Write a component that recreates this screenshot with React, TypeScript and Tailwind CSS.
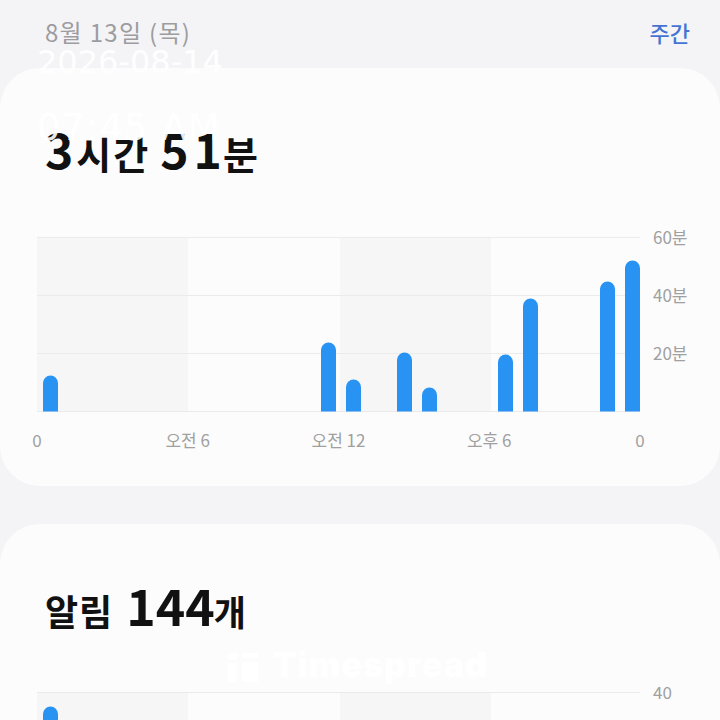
import React from "react";

type Bar = { x: number; h: number };

const bars1: Bar[] = [
  { x: 6, h: 36 },
  { x: 284, h: 69 },
  { x: 309, h: 32 },
  { x: 360, h: 59 },
  { x: 385, h: 24 },
  { x: 461, h: 57 },
  { x: 486, h: 113 },
  { x: 563, h: 130 },
  { x: 588, h: 151 },
];

const bars2: Bar[] = [
  { x: 6, h: 160 },
  { x: 284, h: 60 },
  { x: 360, h: 40 },
  { x: 486, h: 90 },
  { x: 588, h: 110 },
];

function barPath(x: number, h: number) {
  const w = 15;
  const r = 7.5;
  const base = 174.5;
  const top = base - h;
  return `M${x} ${base} L${x} ${top + r} A${r} ${r} 0 0 1 ${x + w} ${top + r} L${x + w} ${base} Z`;
}

function Plot({ bars }: { bars: Bar[] }) {
  return (
    <svg width="603" height="175" viewBox="0 0 603 175" className="block shrink-0">
      <rect x="0" y="0" width="151" height="175" fill="#f6f6f6" />
      <rect x="303" y="0" width="151" height="175" fill="#f6f6f6" />
      {[0.5, 58.5, 116.5, 174.5].map((y) => (
        <line key={y} x1="0" x2="603" y1={y} y2={y} stroke="#ebebeb" strokeWidth="1" />
      ))}
      {bars.map((b, i) => (
        <path key={i} d={barPath(b.x, b.h)} fill="#2893f3" />
      ))}
    </svg>
  );
}

function Chart({ bars, yLabels }: { bars: Bar[]; yLabels: string[] }) {
  return (
    <div className="flex flex-col">
      <div className="flex pl-[37px]">
        <Plot bars={bars} />
        <div className="ml-[13px] -mt-[10px] flex flex-col text-[17px] text-[#a0a0a0]">
          {yLabels.map((l) => (
            <div key={l} className="h-[58px] leading-[20px] whitespace-nowrap">
              {l}
            </div>
          ))}
        </div>
      </div>
      <div className="ml-[37px] mt-[18px] flex w-[603px] justify-between text-[17px] leading-[20px] text-[#a0a0a0]">
        {["0", "오전 6", "오전 12", "오후 6", "0"].map((l, i) => (
          <div key={i} className="flex w-0 justify-center">
            <span className="whitespace-nowrap">{l}</span>
          </div>
        ))}
      </div>
    </div>
  );
}

export default function App() {
  return (
    <div className="relative h-[720px] w-[720px] overflow-hidden bg-[#f4f4f6] font-['Noto_Sans_CJK_KR',sans-serif]">
      <header className="flex h-[68px] items-center justify-between pb-[4px] pl-[45px] pr-[30px]">
        <span className="text-[24px] tracking-[1.3px] text-[#9c9ca1]">8월 13일 (목)</span>
        <span className="text-[22px] font-medium text-[#4474d3]">주간</span>
      </header>

      <section className="flex h-[418px] flex-col rounded-[40px] bg-[#fcfcfc]">
        <div className="flex h-[108px] shrink-0 items-baseline pl-[45px] pt-[52px] leading-[56px] font-bold text-[#111]">
          <span className="text-[48px]">3</span>
          <span className="ml-[3px] text-[38px] tracking-[2px]">시간</span>
          <span className="ml-[10px] text-[48px] tracking-[5px]">51</span>
          <span className="-ml-[4px] text-[38px]">분</span>
        </div>
        <div className="mt-[61px]">
          <Chart bars={bars1} yLabels={["60분", "40분", "20분"]} />
        </div>
      </section>

      <section className="mt-[38px] flex h-[400px] flex-col rounded-t-[40px] bg-[#fcfcfc]">
        <div className="flex h-[108px] shrink-0 items-baseline pl-[45px] pt-[52px] leading-[56px] font-bold text-[#111]">
          <span className="text-[36px] tracking-[1px]">알림</span>
          <span className="ml-[13px] text-[50px]">144</span>
          <span className="-ml-[1px] text-[35px]">개</span>
        </div>
        <div className="mt-[60px]">
          <Chart bars={bars2} yLabels={["40", "20"]} />
        </div>
      </section>

      {/* watermarks */}
      <div className="pointer-events-none absolute left-[37px] top-[46px] font-['DejaVu_Sans',sans-serif] text-[32px] leading-none text-white/95">
        2026-08-14
      </div>
      <div className="pointer-events-none absolute left-[37px] top-[109px] font-['DejaVu_Sans',sans-serif] text-[37px] tracking-[1px] leading-none text-white/90">
        07:45 AM
      </div>
      <div className="pointer-events-none absolute left-[228px] top-[648px] flex items-start">
        <svg width="30" height="29" viewBox="0 0 30 29" className="mt-[5px]">
          <rect x="0" y="0" width="9" height="7" fill="#ffffff" />
          <rect x="14" y="0" width="16" height="5" fill="#ffffff" />
          <rect x="0" y="10" width="9" height="19" fill="#ffffff" />
          <rect x="14" y="9" width="16" height="20" fill="#ffffff" />
        </svg>
        <span className="ml-[15px] font-['Inter',sans-serif] text-[34px] font-black leading-none tracking-[1px] text-white">
          Timespread
        </span>
      </div>
    </div>
  );
}
